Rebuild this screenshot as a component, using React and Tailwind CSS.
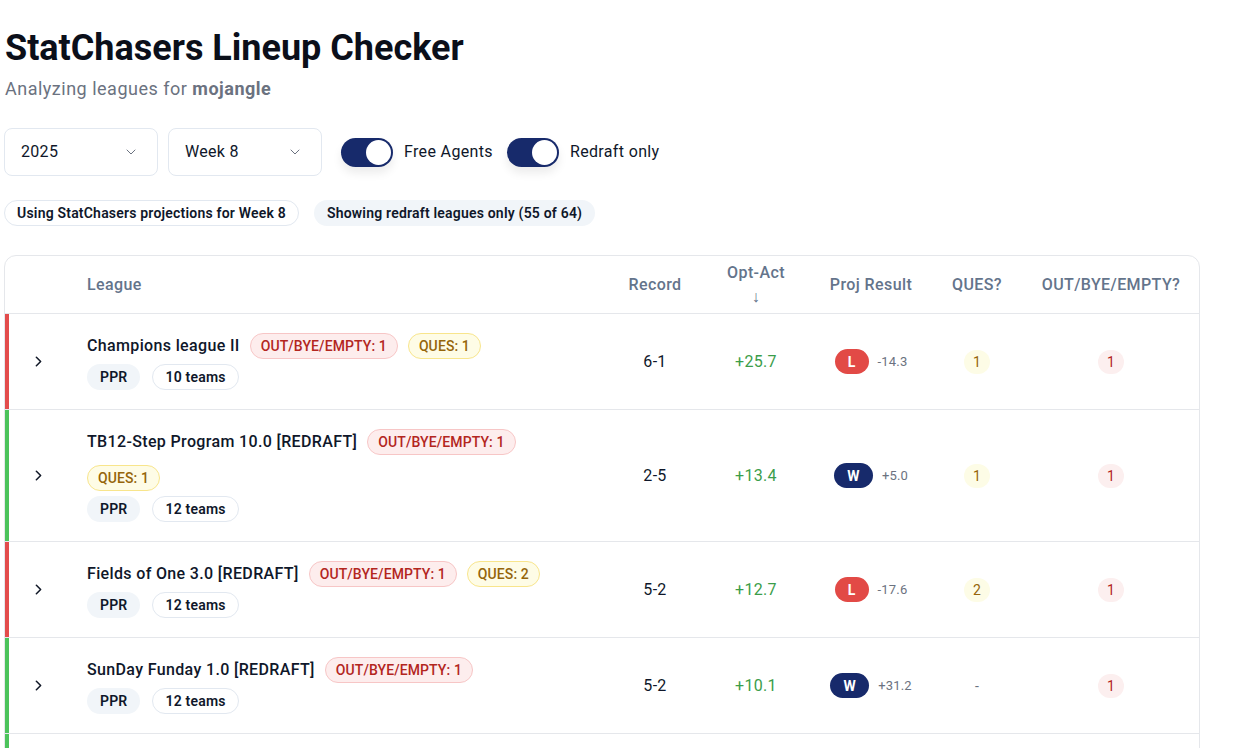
import React from "react";
import { ChevronDown, ChevronRight } from "lucide-react";

const rows = [
  {
    name: "Champions league II",
    bar: "shadow-[inset_4px_0_0_#e34c4c]",
    out: 1,
    ques: 1,
    teams: "10 teams",
    record: "6-1",
    opt: "+25.7",
    res: "L",
    score: "-14.3",
    quesN: "1",
    outN: "1",
  },
  {
    name: "TB12-Step Program 10.0 [REDRAFT]",
    bar: "shadow-[inset_4px_0_0_#4cc35b]",
    out: 1,
    ques: 1,
    teams: "12 teams",
    record: "2-5",
    opt: "+13.4",
    res: "W",
    score: "+5.0",
    quesN: "1",
    outN: "1",
  },
  {
    name: "Fields of One 3.0 [REDRAFT]",
    bar: "shadow-[inset_4px_0_0_#e34c4c]",
    out: 1,
    ques: 2,
    teams: "12 teams",
    record: "5-2",
    opt: "+12.7",
    res: "L",
    score: "-17.6",
    quesN: "2",
    outN: "1",
  },
  {
    name: "SunDay Funday 1.0 [REDRAFT]",
    bar: "shadow-[inset_4px_0_0_#4cc35b]",
    out: 1,
    ques: null,
    teams: "12 teams",
    record: "5-2",
    opt: "+10.1",
    res: "W",
    score: "+31.2",
    quesN: null,
    outN: "1",
  },
  {
    name: "Dynasty Degenerates [REDRAFT]",
    bar: "shadow-[inset_4px_0_0_#4cc35b]",
    out: 1,
    ques: null,
    teams: "12 teams",
    record: "4-3",
    opt: "+9.8",
    res: "W",
    score: "+12.4",
    quesN: null,
    outN: "1",
  },
];

const grid =
  "grid grid-cols-[66px_538px_92px_110px_120px_92px_1fr] items-center";

function Select({ value }) {
  return (
    <div className="flex h-12 w-[154px] items-center justify-between rounded-lg border border-[#e2e8f0] bg-white pl-4 pr-[18px] text-base tracking-[0.3px] text-[#0f172a]">
      <span>{value}</span>
      <ChevronDown size={16} strokeWidth={1.5} className="text-[#6b7280]" />
    </div>
  );
}

function Toggle({ label }) {
  return (
    <div className="flex items-center gap-[11px]">
      <div className="flex h-[29px] w-[52px] items-center justify-end rounded-full bg-[#172a6b] p-[2px] shadow-[0_6px_10px_rgba(0,0,0,0.08)]">
        <div className="h-[25px] w-[25px] rounded-full bg-white" />
      </div>
      <span className="text-base tracking-[0.35px] text-[#0f172a]">{label}</span>
    </div>
  );
}

function OutBadge({ n }) {
  return (
    <span className="inline-flex h-[26px] items-center rounded-full border border-[#f7c6c6] bg-[#fdeded] px-[10px] text-sm font-medium tracking-[0.1px] text-[#b3261e]">
      OUT/BYE/EMPTY: {n}
    </span>
  );
}

function QuesBadge({ n }) {
  return (
    <span className="inline-flex h-[26px] items-center rounded-full border border-[#f8e58c] bg-[#fefce6] px-[10px] text-sm font-medium tracking-[0.1px] text-[#95650a]">
      QUES: {n}
    </span>
  );
}

function Row({ r }) {
  return (
    <div className={`${grid} border-t border-[#e5e7eb] py-[19px] ${r.bar}`}>
      <div className="flex justify-center pl-[1px]">
        <ChevronRight size={17} strokeWidth={2.2} className="text-[#111827]" />
      </div>
      <div className="flex flex-col gap-[5px] pl-4 pr-4">
        <div className="flex flex-wrap items-center gap-x-[10px] gap-y-[10px]">
          <span className="text-base font-medium tracking-[0.35px] text-[#0f172a]">
            {r.name}
          </span>
          <OutBadge n={r.out} />
          {r.ques !== null && <QuesBadge n={r.ques} />}
        </div>
        <div className="flex items-center gap-3">
          <span className="inline-flex h-[26px] items-center rounded-full bg-[#f1f5f9] px-[13px] text-sm font-semibold tracking-[0.2px] text-[#0f172a]">
            PPR
          </span>
          <span className="inline-flex h-[26px] items-center rounded-full border border-[#e2e8f0] bg-white px-[12px] text-sm font-semibold tracking-[0.2px] text-[#0f172a]">
            {r.teams}
          </span>
        </div>
      </div>
      <div className="text-center text-base tracking-[0.3px] text-[#0f172a]">{r.record}</div>
      <div className="text-center text-base tracking-[0.3px] text-[#3b9d4a]">{r.opt}</div>
      <div className="flex items-center justify-center gap-[9px]">
        {r.res === "L" ? (
          <span className="inline-flex h-[25px] w-[34px] items-center justify-center rounded-full bg-[#e24a46] text-sm font-bold text-white">
            L
          </span>
        ) : (
          <span className="inline-flex h-[25px] w-[39px] items-center justify-center rounded-full bg-[#172a6b] text-sm font-bold text-white">
            W
          </span>
        )}
        <span className="text-[13px] tracking-[0.2px] text-[#6b7280]">{r.score}</span>
      </div>
      <div className="flex justify-center">
        {r.quesN ? (
          <span className="inline-flex h-[24px] w-[26px] items-center justify-center rounded-full bg-[#fdfce6] text-sm text-[#95650a]">
            {r.quesN}
          </span>
        ) : (
          <span className="text-sm text-[#6b7280]">-</span>
        )}
      </div>
      <div className="flex justify-center">
        <span className="inline-flex h-[24px] w-[26px] items-center justify-center rounded-full bg-[#fcefef] text-sm text-[#b3261e]">
          {r.outN}
        </span>
      </div>
    </div>
  );
}

export default function App() {
  return (
    <div className="min-h-screen bg-white px-1 pt-[28px] font-['Roboto',sans-serif] text-[#0f172a]">
      <h1 className="pl-[1px] text-[36px] font-bold leading-[40px] text-[#0b0f1a]">
        StatChasers Lineup Checker
      </h1>
      <p className="mt-[7px] pl-[1px] text-lg leading-7 tracking-[0.5px] text-[#6b7280]">
        Analyzing leagues for <span className="font-bold">mojangle</span>
      </p>

      <div className="mt-[25px] flex items-center">
        <div className="flex gap-[10px]">
          <Select value="2025" />
          <Select value="Week 8" />
        </div>
        <div className="ml-[19px] flex items-center gap-[14px]">
          <Toggle label="Free Agents" />
          <Toggle label="Redraft only" />
        </div>
      </div>

      <div className="mt-[24px] flex items-center gap-[15px]">
        <span className="inline-flex h-[26px] items-center rounded-full border border-[#e2e8f0] bg-white px-[12px] text-sm font-semibold tracking-[0.2px] text-[#0f172a]">
          Using StatChasers projections for Week 8
        </span>
        <span className="inline-flex h-[26px] items-center rounded-full bg-[#f1f5f9] px-[13px] text-sm font-semibold tracking-[0.2px] text-[#0f172a]">
          Showing redraft leagues only (55 of 64)
        </span>
      </div>

      <div className="mt-[29px] w-[1196px] overflow-hidden rounded-xl border border-[#e5e7eb] bg-white">
        <div className={`${grid} h-[57px] text-base font-medium tracking-[0.4px] text-[#64748b]`}>
          <div />
          <div className="pl-4">League</div>
          <div className="text-center">Record</div>
          <div className="flex flex-col items-center leading-6">
            <span>Opt-Act</span>
            <span className="font-normal">↓</span>
          </div>
          <div className="text-center">Proj Result</div>
          <div className="text-center">QUES?</div>
          <div className="text-center">OUT/BYE/EMPTY?</div>
        </div>
        {rows.map((r) => (
          <Row key={r.name} r={r} />
        ))}
      </div>
    </div>
  );
}
